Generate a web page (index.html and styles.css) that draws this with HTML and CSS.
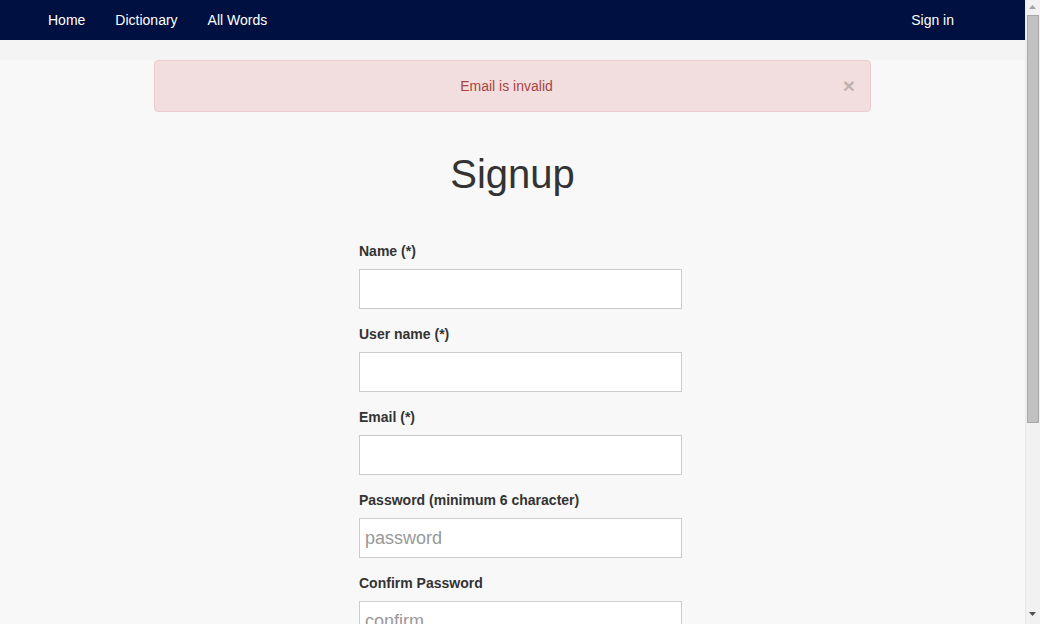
FILE: index.html
```html
<!DOCTYPE html>
<html lang="en">
<head>
<meta charset="utf-8">
<title>Signup</title>
<link rel="stylesheet" href="styles.css">
</head>
<body>
<nav class="navbar">
  <ul class="nav-left">
    <li><a href="#">Home</a></li>
    <li><a href="#">Dictionary</a></li>
    <li><a href="#">All Words</a></li>
  </ul>
  <ul class="nav-right">
    <li><a href="#">Sign in</a></li>
  </ul>
</nav>
<div class="band"></div>
<main class="page">
  <div class="alert">
    <span class="alert-text">Email is invalid</span>
    <button class="close" type="button">&times;</button>
  </div>
  <h1 class="title">Signup</h1>
  <form class="form">
    <div class="group">
      <label>Name (*)</label>
      <input class="input" type="text">
    </div>
    <div class="group">
      <label>User name (*)</label>
      <input class="input" type="text">
    </div>
    <div class="group">
      <label>Email (*)</label>
      <input class="input" type="text">
    </div>
    <div class="group">
      <label>Password (minimum 6 character)</label>
      <input class="input" type="password" placeholder="password">
    </div>
    <div class="group">
      <label>Confirm Password</label>
      <input class="input" type="password" placeholder="confirm">
    </div>
    <div class="group">
      <button class="submit" type="button">Signup</button>
    </div>
  </form>
</main>
<div class="scrollbar" aria-hidden="true">
  <svg class="arrow arrow-up" width="15" height="14" viewBox="0 0 15 14"><path d="M4 9 L7.5 5 L11 9 Z" fill="#a3a3a3"/></svg>
  <div class="thumb"></div>
  <svg class="arrow arrow-down" width="15" height="14" viewBox="0 0 15 14"><path d="M4 5 L7.5 9 L11 5 Z" fill="#505050"/></svg>
</div>
</body>
</html>
```

FILE: styles.css
```css
html, body {
  margin: 0;
  padding: 0;
}
body {
  background: #f8f8f8;
  font-family: "Liberation Sans", Arial, sans-serif;
  font-size: 14px;
  line-height: 20px;
  color: #333;
  padding-right: 15px;
}
.navbar {
  height: 40px;
  background: #001040;
  display: flex;
  justify-content: space-between;
  padding: 0 56px 0 33px;
}
.navbar ul {
  list-style: none;
  margin: 0;
  padding: 0;
  display: flex;
}
.navbar a {
  display: block;
  padding: 10px 15px;
  color: #fff;
  text-decoration: none;
  font-size: 14px;
  line-height: 20px;
}
.band {
  height: 20px;
  background: #f4f4f4;
}
.page {
  display: flex;
  flex-direction: column;
  align-items: center;
  padding-bottom: 60px;
}
.alert {
  box-sizing: border-box;
  width: 717px;
  height: 52px;
  padding-right: 12px;
  background: #f2dede;
  border: 1px solid #ebccd1;
  border-radius: 4px;
  color: #a94442;
  display: flex;
  align-items: center;
  justify-content: center;
  position: relative;
}
.alert-text {
  font-size: 14px;
}
.close {
  position: absolute;
  right: 15px;
  top: 13px;
  background: none;
  border: 0;
  padding: 0;
  font-family: "Liberation Sans", Arial, sans-serif;
  font-size: 21px;
  font-weight: bold;
  line-height: 24px;
  color: #000;
  opacity: 0.2;
}
.title {
  margin: 40px 0 0;
  font-size: 40px;
  font-weight: 500;
  line-height: 44px;
  color: #333;
  height: 89px;
}
.form {
  width: 323px;
  margin-left: 16px;
}
.group {
  display: flex;
  flex-direction: column;
  margin-bottom: 15px;
}
.group label {
  font-weight: bold;
  margin-bottom: 8px;
}
.input {
  box-sizing: border-box;
  height: 40px;
  width: 100%;
  border: 1px solid #ccc;
  border-radius: 0;
  background: #fff;
  padding: 0 5px;
  font-family: "Liberation Sans", Arial, sans-serif;
  font-size: 18px;
  color: #555;
}
.input::placeholder {
  color: #999;
}
.submit {
  height: 40px;
  border: 1px solid #ccc;
  background: #fff;
  font-family: "Liberation Sans", Arial, sans-serif;
  font-size: 14px;
}
.scrollbar {
  position: fixed;
  top: 0;
  right: 0;
  width: 15px;
  height: 100%;
  background: #f1f1f1;
  border-left: 1px solid #e8e8e8;
  box-sizing: border-box;
  display: flex;
  flex-direction: column;
}
.arrow {
  display: block;
  flex: none;
  margin-left: -1px;
}
.thumb {
  flex: none;
  height: 408px;
  margin: 1px 1px 0 1px;
  background: #c1c1c1;
  border: 1px solid #a8a8a8;
  box-sizing: border-box;
}
.arrow-down {
  margin-top: auto;
  margin-bottom: 3px;
}
```
